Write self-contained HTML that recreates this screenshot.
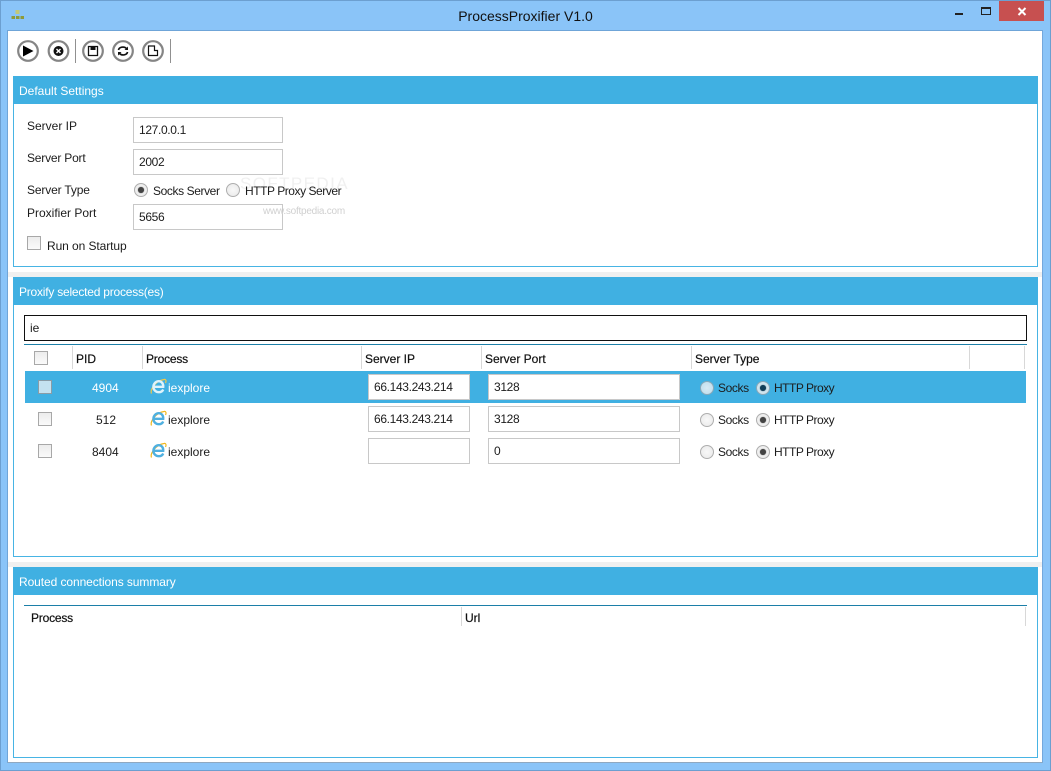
<!DOCTYPE html>
<html><head><meta charset="utf-8"><style>
html,body{margin:0;padding:0;width:1051px;height:771px;overflow:hidden;background:#8ac4f8}
body{position:relative;font-family:"Liberation Sans",sans-serif;font-size:12px;color:#1c1c1c}
div,span{position:absolute;box-sizing:border-box}
.t{white-space:nowrap;line-height:16px;height:16px}
.hd{left:13px;width:1025px;height:28px;background:#40b0e2;color:#fff;padding:7px 0 0 6px;line-height:16px}
.bx{left:13px;width:1025px;background:#fff;border:1px solid #48b4e4;border-top:0}
.in{background:#fff;border:1px solid #c8c8c8;padding:0 0 0 5px;line-height:24px;height:26px;white-space:nowrap;letter-spacing:-.35px}
.cb{width:14px;height:14px;border:1px solid #a8a8a8;background:linear-gradient(#ececec,#fafafa)}
.r{width:14px;height:14px;border-radius:50%;border:1px solid #aeaeae;background:radial-gradient(#f8f8f8,#e8e8e8)}
.r.on:after{content:"";position:absolute;left:3px;top:3px;width:6px;height:6px;border-radius:50%;background:#444;box-shadow:0 0 1px #444}
.sel.r{background:radial-gradient(#d8eaf4,#bcdcec);border-color:#8aa8b8}
.sel.r.on{background:#cfe4ee}
.sel.r.on:after{background:#123e58;box-shadow:0 0 1px #123e58}
.hs{width:1px;background:#d8d8d8}
.b{color:#111;-webkit-text-stroke:.2px #111}
.n{letter-spacing:-.4px}
</style></head><body>
<div style="left:0;top:0;width:1051px;height:771px;border:1px solid #6c9fd0"></div>
<svg style="position:absolute;left:10px;top:8px" width="16" height="12"><rect x="5.500" y="2" width="4" height="4" fill="#c2c878"/><rect x="1.500" y="8" width="3.500" height="3" fill="#8e9a3a"/><rect x="6" y="8" width="3.500" height="3" fill="#8e9a3a"/><rect x="10.500" y="8" width="3.500" height="3" fill="#8e9a3a"/></svg>
<div class="t" style="left:0;width:1051px;top:8px;text-align:center;font-size:14px;color:#111;line-height:16px">ProcessProxifier V1.0</div>
<div style="left:955px;top:13px;width:8px;height:2px;background:#222"></div>
<div style="left:981px;top:7px;width:10px;height:8px;border:1px solid #222;border-top:2px solid #222"></div>
<div style="left:999px;top:1px;width:45px;height:20px;background:#c75050"></div>
<svg style="position:absolute;left:1017px;top:7px" width="10" height="9"><path d="M1.500 1L8.500 8M8.500 1L1.500 8" stroke="#fff" stroke-width="2"/></svg>

<div style="left:7px;top:30px;width:1036px;height:733px;background:#fff;border:1px solid #6fa5d8;border-right-color:#74a8dc;border-bottom-color:#8fa8c0"></div>

<svg style="position:absolute;left:16px;top:39px" width="160" height="25" fill="none">
<g stroke="#858585" stroke-width="2.200"><circle cx="12" cy="12" r="9.800"/><circle cx="42.500" cy="12" r="9.800"/><circle cx="77" cy="12" r="9.800"/><circle cx="107" cy="12" r="9.800"/><circle cx="137" cy="12" r="9.800"/></g>
<path d="M7 6.500L17.500 12L7 17.500Z" fill="#000"/>
<circle cx="42.500" cy="12" r="5" fill="#111"/><path d="M40.500 10L44.500 14M44.500 10L40.500 14" stroke="#fff" stroke-width="1.400"/>
<path d="M72.500 7.500H81.500V16.500H72.500Z" stroke="#111" stroke-width="1.300"/><path d="M74.500 7.500H79.500V11H74.500Z" fill="#111"/>
<path d="M102.500 11C103 8 108 7 110.500 9.500M111.500 13C111 16 106 17 103.500 14.500" stroke="#111" stroke-width="1.700"/><path d="M112 7.500V11H108.500ZM102 16.500V13H105.500Z" fill="#111"/>
<path d="M132.500 7H138.500V11.500H141.500V16.500H132.500Z" stroke="#111" stroke-width="1.200"/>
</svg>
<div style="left:75px;top:39px;width:1px;height:24px;background:#909090"></div>
<div style="left:170px;top:39px;width:1px;height:24px;background:#909090"></div>

<div class="hd" style="top:76px">Default Settings</div>
<div class="bx" style="top:104px;height:163px"></div>
<div class="t" style="left:240px;top:176px;font-size:17px;letter-spacing:1.400px;color:#f0f0f0">SOFTPEDIA</div>
<div class="t" style="left:27px;top:118px">Server IP</div>
<div class="in" style="left:133px;top:117px;width:150px">127.0.0.1</div>
<div class="t" style="left:27px;top:150px;letter-spacing:-.2px">Server Port</div>
<div class="in" style="left:133px;top:149px;width:150px">2002</div>
<div class="t" style="left:27px;top:182px;letter-spacing:-.15px">Server Type</div>
<div class="r on" style="left:134px;top:183px"></div>
<div class="t n" style="left:153px;top:183px">Socks Server</div>
<div class="r" style="left:226px;top:183px"></div>
<div class="t n" style="left:245px;top:183px;letter-spacing:-.45px">HTTP Proxy Server</div>
<div class="t" style="left:27px;top:205px">Proxifier Port</div>
<div class="in" style="left:133px;top:204px;width:150px">5656</div>
<div class="t" style="left:263px;top:204px;font-size:10px;letter-spacing:-.25px;color:#d0d0d0">www.softpedia.com</div>
<div class="cb" style="left:27px;top:236px"></div>
<div class="t" style="left:47px;top:238px;letter-spacing:-.08px">Run on Startup</div>

<div style="left:8px;top:272px;width:1034px;height:5px;background:#f0f0f0"></div>
<div class="hd" style="top:277px;letter-spacing:-.22px">Proxify selected process(es)</div>
<div class="bx" style="top:305px;height:252px"></div>
<div style="left:24px;top:315px;width:1003px;height:26px;border:1px solid #111;background:#fff;padding-left:5px;line-height:24px">ie</div>
<div style="left:24px;top:344px;width:1003px;height:1px;background:#1c7fa8"></div>
<div class="cb" style="left:34px;top:351px"></div>
<div class="hs" style="left:72px;top:346px;height:23px"></div>
<div class="hs" style="left:142px;top:346px;height:23px"></div>
<div class="hs" style="left:361px;top:346px;height:23px"></div>
<div class="hs" style="left:481px;top:346px;height:23px"></div>
<div class="hs" style="left:691px;top:346px;height:23px"></div>
<div class="hs" style="left:969px;top:346px;height:23px"></div>
<div class="hs" style="left:1024px;top:346px;height:23px"></div>
<div class="t b" style="left:76px;top:351px">PID</div>
<div class="t b" style="left:146px;top:351px;letter-spacing:-.2px">Process</div>
<div class="t b" style="left:365px;top:351px">Server IP</div>
<div class="t b" style="left:485px;top:351px">Server Port</div>
<div class="t b" style="left:695px;top:351px">Server Type</div>

<div style="left:25px;top:371px;width:1001px;height:32px;background:#40b0e2"></div>
<!-- row 1 -->
<div class="cb" style="left:38px;top:380px;background:#c4e2f0;border-color:#8a9ca6"></div>
<div class="t" style="left:92px;top:380px;color:#fff">4904</div>
<svg style="position:absolute;left:150px;top:378px" width="17" height="17" viewBox="0 0 17 17" fill="none"><path d="M1.500 15.500C0 12 5 3 14 1.500C16 1 16.500 3 15.500 5" stroke="#f0c848" stroke-width="1.200"/><path d="M4.200 8.800H13.200C13.500 5 11 3.200 8.800 3.200C6 3.200 3.400 5.500 3.400 9C3.400 12 6 14.200 8.800 14.200C10.800 14.200 12.500 13.200 13.200 11.500" stroke="#dff3fb" stroke-width="2.400"/></svg>
<div class="t" style="left:168px;top:380px;color:#fff">iexplore</div>
<div class="in" style="left:368px;top:374px;width:102px">66.143.243.214</div>
<div class="in" style="left:488px;top:374px;width:192px">3128</div>
<div class="r sel" style="left:700px;top:381px"></div>
<div class="t n" style="left:718px;top:380px">Socks</div>
<div class="r sel on" style="left:756px;top:381px"></div>
<div class="t n" style="left:774px;top:380px;letter-spacing:-.5px">HTTP Proxy</div>
<!-- row 2 -->
<div class="cb" style="left:38px;top:412px"></div>
<div class="t" style="left:96px;top:412px">512</div>
<svg style="position:absolute;left:150px;top:410px" width="17" height="17" viewBox="0 0 17 17" fill="none"><path d="M1.500 15.500C0 12 5 3 14 1.500C16 1 16.500 3 15.500 5" stroke="#f0b820" stroke-width="1.200"/><path d="M4.200 8.800H13.200C13.500 5 11 3.200 8.800 3.200C6 3.200 3.400 5.500 3.400 9C3.400 12 6 14.200 8.800 14.200C10.800 14.200 12.500 13.200 13.200 11.500" stroke="#4fb0e0" stroke-width="2.400"/></svg>
<div class="t" style="left:168px;top:412px">iexplore</div>
<div class="in" style="left:368px;top:406px;width:102px">66.143.243.214</div>
<div class="in" style="left:488px;top:406px;width:192px">3128</div>
<div class="r" style="left:700px;top:413px"></div>
<div class="t n" style="left:718px;top:412px">Socks</div>
<div class="r on" style="left:756px;top:413px"></div>
<div class="t n" style="left:774px;top:412px;letter-spacing:-.5px">HTTP Proxy</div>
<!-- row 3 -->
<div class="cb" style="left:38px;top:444px"></div>
<div class="t" style="left:92px;top:444px">8404</div>
<svg style="position:absolute;left:150px;top:442px" width="17" height="17" viewBox="0 0 17 17" fill="none"><path d="M1.500 15.500C0 12 5 3 14 1.500C16 1 16.500 3 15.500 5" stroke="#f0b820" stroke-width="1.200"/><path d="M4.200 8.800H13.200C13.500 5 11 3.200 8.800 3.200C6 3.200 3.400 5.500 3.400 9C3.400 12 6 14.200 8.800 14.200C10.800 14.200 12.500 13.200 13.200 11.500" stroke="#4fb0e0" stroke-width="2.400"/></svg>
<div class="t" style="left:168px;top:444px">iexplore</div>
<div class="in" style="left:368px;top:438px;width:102px"></div>
<div class="in" style="left:488px;top:438px;width:192px">0</div>
<div class="r" style="left:700px;top:445px"></div>
<div class="t n" style="left:718px;top:444px">Socks</div>
<div class="r on" style="left:756px;top:445px"></div>
<div class="t n" style="left:774px;top:444px;letter-spacing:-.5px">HTTP Proxy</div>

<div style="left:8px;top:562px;width:1034px;height:5px;background:#f0f0f0"></div>
<div class="hd" style="top:567px;letter-spacing:-.08px">Routed connections summary</div>
<div class="bx" style="top:595px;height:163px"></div>
<div style="left:24px;top:605px;width:1003px;height:1px;background:#1c7fa8"></div>
<div class="hs" style="left:461px;top:607px;height:19px"></div>
<div class="hs" style="left:1025px;top:607px;height:19px"></div>
<div class="t b" style="left:31px;top:610px;letter-spacing:-.2px">Process</div>
<div class="t b" style="left:465px;top:610px">Url</div>
</body></html>
